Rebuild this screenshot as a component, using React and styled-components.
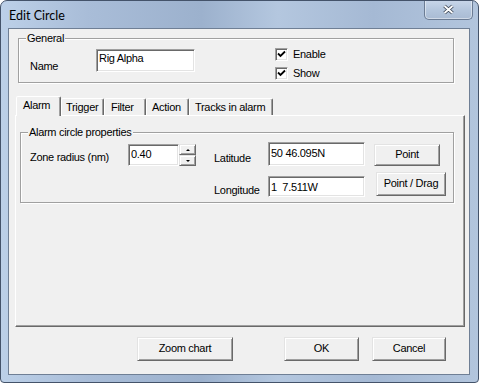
import React from 'react';
import styled, { createGlobalStyle } from 'styled-components';

const GlobalStyle = createGlobalStyle`
  html, body {
    margin: 0;
    padding: 0;
    background: #ffffff;
  }
  body {
    font-family: "Liberation Sans", Arial, sans-serif;
    font-size: 11px;
    letter-spacing: -0.3px;
    color: #000;
  }
  * {
    box-sizing: border-box;
  }
`;

const Window = styled.div`
  width: 479px;
  height: 383px;
  border: 1px solid #44536a;
  border-radius: 7px 7px 4px 4px;
  background: linear-gradient(90deg, #bcd0e8 0%, #a9bdd8 18%, #9cb1cd 42%, #b4c7df 58%, #a5b9d4 78%, #b2c5dd 100%);
  display: flex;
  flex-direction: column;
  overflow: hidden;
`;

const TitleBar = styled.div`
  height: 27px;
  flex: none;
  display: flex;
  justify-content: space-between;
  align-items: flex-start;
  padding-left: 8px;
`;

const Title = styled.span`
  font-family: "Lato", "Noto Sans", sans-serif;
  font-size: 12.5px;
  letter-spacing: 0;
  line-height: 16px;
  padding-top: 7px;
`;

const CloseButton = styled.div`
  margin: -1px 5px 0 0;
  width: 49px;
  height: 20px;
  border: 1px solid #6b7c94;
  border-top: none;
  border-radius: 0 0 5px 5px;
  background: linear-gradient(180deg, #c9d7ea 0%, #b3c5dc 55%, #a9bbd3 100%);
  box-shadow: inset 0 0 0 1px rgba(255, 255, 255, 0.45);
  display: flex;
  align-items: center;
  justify-content: center;
`;

const Client = styled.div`
  flex: 1;
  margin: 0 8px 7px 7px;
  border: 1px solid #6f7f95;
  background: #f0f0f0;
  display: flex;
  flex-direction: column;
`;

const Group = styled.fieldset`
  margin: ${(p) => p.$top}px 0 0 ${(p) => p.$left}px;
  width: ${(p) => p.$width}px;
  min-width: 0;
  padding: ${(p) => p.$pad};
  border: 1px solid #a0a0a0;
  box-shadow: inset 1px 1px 0 #fff, 1px 1px 0 #fff;
`;

const Legend = styled.legend`
  margin-left: ${(p) => p.$ml}px;
  padding: 0 1px;
  line-height: 13px;
  background: #f0f0f0;
`;

const GeneralRow = styled.div`
  display: flex;
  align-items: flex-start;
`;

const Field = styled.div`
  display: flex;
  align-items: flex-end;
  margin-top: 3px;
`;

const Label = styled.span`
  width: ${(p) => (p.$w ? `${p.$w}px` : 'auto')};
  line-height: 13px;
  margin-bottom: ${(p) => p.$mb || 0}px;
  flex: none;
  white-space: nowrap;
`;

const TextBox = styled.input`
  width: ${(p) => p.$w}px;
  height: ${(p) => p.$h}px;
  margin-bottom: ${(p) => p.$mb || 0}px;
  padding: ${(p) => p.$pt}px 2px ${(p) => p.$h - 2 - p.$pt - 13}px;
  font: inherit;
  letter-spacing: inherit;
  line-height: 13px;
  color: #000;
  background: #fff;
  border: 1px solid;
  border-color: #a0a0a0 #fff #fff #a0a0a0;
  box-shadow: inset 1px 1px 0 #696969, inset -1px -1px 0 #e3e3e3;
  outline: none;
`;

const CheckList = styled.div`
  display: flex;
  flex-direction: column;
  gap: 6px;
  margin: 2px 0 0 80px;
`;

const CheckRow = styled.label`
  display: flex;
  align-items: center;
  gap: 5px;
  height: 13px;
  line-height: 13px;
`;

const CheckBox = styled.span`
  width: 13px;
  height: 13px;
  border: 1px solid;
  border-color: #a0a0a0 #fff #fff #a0a0a0;
  box-shadow: inset 1px 1px 0 #696969, inset -1px -1px 0 #e3e3e3;
  background: #fff;
  display: flex;
  align-items: center;
  justify-content: center;
`;

const TabStrip = styled.div`
  display: flex;
  align-items: flex-end;
  height: 19px;
  margin: 13px 0 0 7px;
  position: relative;
  z-index: 1;
`;

const Tab = styled.div`
  width: ${(p) => p.$w}px;
  height: ${(p) => (p.$active ? 20 : 17)}px;
  margin-bottom: ${(p) => (p.$active ? -1 : 0)}px;
  padding: 2px 0 0 ${(p) => p.$pl}px;
  line-height: 13px;
  white-space: nowrap;
  background: #f0f0f0;
  border: 1px solid;
  border-bottom: none;
  border-color: #fff #696969 transparent #fff;
  box-shadow: inset -1px 0 0 #a0a0a0;
  border-radius: 2px 2px 0 0;
`;

const Panel = styled.div`
  margin-left: 6px;
  width: 450px;
  height: 212px;
  padding: 10px 0 0 4px;
  border: 1px solid;
  border-color: #fff #696969 #696969 #fff;
  box-shadow: inset -1px -1px 0 #a0a0a0;
`;

const PropGrid = styled.div`
  display: grid;
  grid-template-columns: 98px 86px 54px 106px auto;
  grid-template-rows: 24px 25px;
  row-gap: 6px;
  align-items: end;
  justify-items: start;
`;

const Spin = styled.div`
  display: flex;
  height: 22px;
`;

const SpinButtons = styled.div`
  display: flex;
  flex-direction: column;
  width: 17px;
`;

const SpinButton = styled.div`
  flex: 1;
  background: #f0f0f0;
  border: 1px solid;
  border-color: #e3e3e3 #696969 #696969 #e3e3e3;
  box-shadow: inset 1px 1px 0 #fff, inset -1px -1px 0 #a0a0a0;
  display: flex;
  align-items: center;
  justify-content: center;

  &::after {
    content: '';
    border-left: 2px solid transparent;
    border-right: 2px solid transparent;
    border-${(p) => (p.$down ? 'top' : 'bottom')}: 2px solid #000;
  }
`;

const Button = styled.div`
  width: ${(p) => p.$w}px;
  height: ${(p) => p.$h || 24}px;
  margin-left: ${(p) => p.$ml || 0}px;
  margin-bottom: ${(p) => p.$mb || 0}px;
  padding-bottom: 2px;
  line-height: 13px;
  background: #f0f0f0;
  border: 1px solid;
  border-color: #e3e3e3 #696969 #696969 #e3e3e3;
  box-shadow: inset 1px 1px 0 #fff, inset -1px -1px 0 #a0a0a0;
  display: flex;
  align-items: center;
  justify-content: center;
  white-space: nowrap;
`;

const Footer = styled.div`
  display: flex;
  margin-top: 10px;
  padding-left: 128px;
`;

const CloseGlyph = () => (
  <svg width="13" height="11" viewBox="0 0 13 11">
    <path d="M2.5 2 L10.5 9 M10.5 2 L2.5 9" stroke="#3b4656" strokeWidth="3.6" />
    <path d="M2.5 2 L10.5 9 M10.5 2 L2.5 9" stroke="#fff" strokeWidth="1.8" />
  </svg>
);

const CheckMark = () => (
  <svg width="9" height="9" viewBox="0 0 9 9">
    <path d="M1 3.5 L3.5 6 L8 1.5" fill="none" stroke="#000" strokeWidth="1.8" />
  </svg>
);

const tabs = [
  { label: 'Alarm', w: 45, pl: 6 },
  { label: 'Trigger', w: 43, pl: 4 },
  { label: 'Filter', w: 42, pl: 6 },
  { label: 'Action', w: 43, pl: 5 },
  { label: 'Tracks in alarm', w: 84, pl: 5 },
];

export default function App() {
  return (
    <>
      <GlobalStyle />
      <Window>
        <TitleBar>
          <Title>Edit Circle</Title>
          <CloseButton>
            <CloseGlyph />
          </CloseButton>
        </TitleBar>
        <Client>
          <Group $top={3} $left={9} $width={436} $pad="1px 0 2px 11px">
            <Legend $ml={-4}>General</Legend>
            <GeneralRow>
              <Field>
                <Label $w={66} $mb={-1}>Name</Label>
                <TextBox $w={99} $h={23} $pt={1} defaultValue="Rig Alpha" />
              </Field>
              <CheckList>
                <CheckRow>
                  <CheckBox><CheckMark /></CheckBox>
                  Enable
                </CheckRow>
                <CheckRow>
                  <CheckBox><CheckMark /></CheckBox>
                  Show
                </CheckRow>
              </CheckList>
            </GeneralRow>
          </Group>

          <TabStrip>
            {tabs.map((t, i) => (
              <Tab key={t.label} $w={t.w} $pl={t.pl} $active={i === 0}>
                {t.label}
              </Tab>
            ))}
          </TabStrip>
          <Panel>
            <Group $top={0} $left={0} $width={434} $pad="3px 0 5px 9px">
              <Legend $ml={-2}>Alarm circle properties</Legend>
              <PropGrid>
                <Label $mb={2}>Zone radius (nm)</Label>
                <Spin>
                  <TextBox $w={51} $h={22} $pt={2} defaultValue="0.40" />
                  <SpinButtons>
                    <SpinButton />
                    <SpinButton $down />
                  </SpinButtons>
                </Spin>
                <Label $mb={1}>Latitude</Label>
                <TextBox $w={97} $h={24} $pt={3} defaultValue="50 46.095N" />
                <Button $w={66} $h={22}>Point</Button>

                <span />
                <span />
                <Label $mb={0}>Longitude</Label>
                <TextBox $w={97} $h={21} $pt={3} defaultValue="1  7.511W" />
                <Button $w={70} $h={24} $ml={2} $mb={1}>Point / Drag</Button>
              </PropGrid>
            </Group>
          </Panel>

          <Footer>
            <Button $w={96}>Zoom chart</Button>
            <Button $w={75} $ml={51}>OK</Button>
            <Button $w={74} $ml={13}>Cancel</Button>
          </Footer>
        </Client>
      </Window>
    </>
  );
}
